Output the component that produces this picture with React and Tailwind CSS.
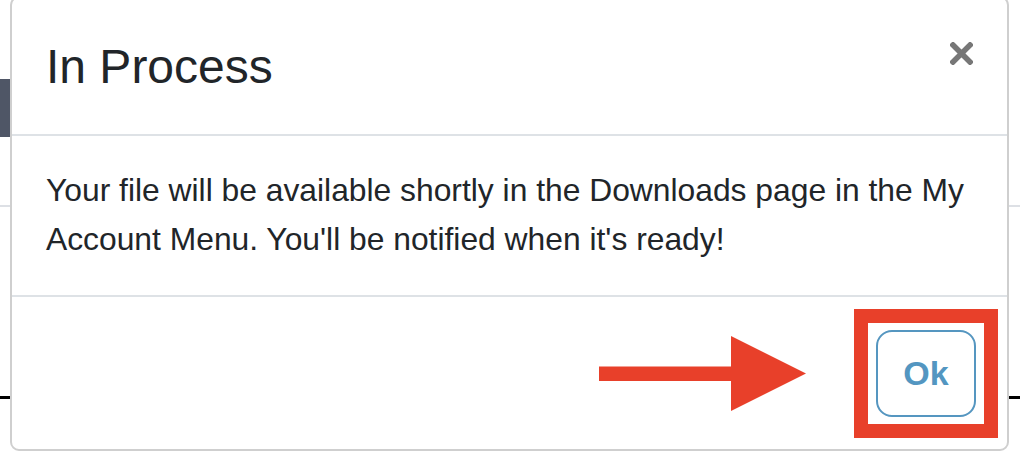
export default function App() {
  return (
    <div className="relative h-[464px] w-[1020px] overflow-hidden bg-white" style={{ fontFamily: '"Liberation Sans", Arial, sans-serif' }}>
      {/* page behind the dialog */}
      <div className="mt-[79px] h-[58px] w-[10px] bg-[#4f5666]" />
      <div className="mt-[68px] h-[2px] w-full bg-[#dde0e5]" />
      <div className="mt-[189px] h-[3px] w-full bg-black" />

      {/* dialog */}
      <div className="absolute left-[10px] top-[-4px] flex w-[999px] flex-col rounded-[9px] border-2 border-[#cfcfcf] bg-white text-[#212529]">
        <div className="flex h-[138px] items-start justify-between border-b-2 border-[#dee2e6] px-[34px] pt-[40px]">
          <h4 className="text-[48px] leading-[1.2] font-normal">In Process</h4>
          <button className="mt-[4px] text-[#777]" aria-label="Close">
            <svg width="23" height="23" viewBox="0 0 23 23">
              <path d="M3 3 L20 20 M20 3 L3 20" stroke="currentColor" strokeWidth="5.5" strokeLinecap="square" />
            </svg>
          </button>
        </div>

        <div className="border-b-2 border-[#dee2e6] px-[34px] pt-[30px] pb-[31px]">
          <p className="text-[31.8px] leading-[49px]">
            Your file will be available shortly in the Downloads page in the My Account Menu. You'll be notified when it's ready!
          </p>
        </div>

        <div className="flex h-[152px] items-center justify-end gap-[48px] pr-[9px]">
          <svg width="207" height="75" viewBox="0 0 207 75">
            <rect x="0" y="30.5" width="134" height="14.5" fill="#e8402a" />
            <polygon points="132,0 207,37.5 132,75" fill="#e8402a" />
          </svg>
          <div className="border-[14px] border-[#e8402a] px-[8px] py-[7px]">
            <button className="flex h-[87px] w-[100px] items-center justify-center rounded-[16px] border-2 border-[#5596c0] text-[34px] font-bold text-[#5396c1]">
              Ok
            </button>
          </div>
        </div>
      </div>
    </div>
  );
}
